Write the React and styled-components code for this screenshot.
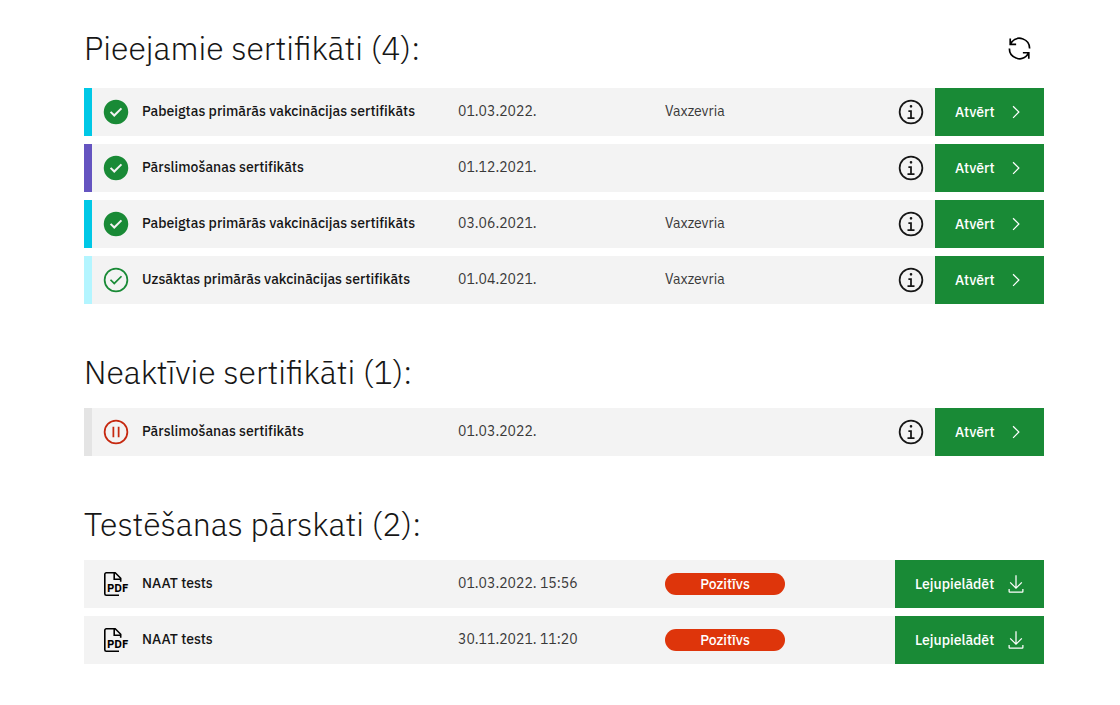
import React from 'react';
import styled, { createGlobalStyle } from 'styled-components';

const GlobalStyle = createGlobalStyle`
    * {
        box-sizing: border-box;
    }

    body {
        margin: 0;
        background: #fff;
        color: #161616;
        font-family: "IBM Plex Sans", "Noto Sans", sans-serif;
        font-size: 14px;
        line-height: 20px;
    }
`;

const Page = styled.main`
    display: flex;
    flex-direction: column;
    gap: 48px;
    padding: 24px 76px 40px 84px;
`;

const SectionHeader = styled.header`
    display: flex;
    justify-content: space-between;
    align-items: center;
    margin-bottom: 16px;
`;

const SectionTitle = styled.h2`
    margin: 0;
    font-size: 32px;
    font-weight: 300;
    line-height: 40px;
`;

const RefreshButton = styled.button`
    display: flex;
    justify-content: center;
    align-items: center;
    width: 50px;
    height: 48px;
    padding: 0;
    border: none;
    background: transparent;
    color: #000;
    cursor: pointer;
`;

const RowList = styled.ul`
    display: flex;
    flex-direction: column;
    gap: 8px;
    margin: 0;
    padding: 0;
    list-style: none;
`;

const Row = styled.li`
    display: grid;
    grid-template-columns: 50px 316fr 207fr 379fr;
    align-items: center;
    min-height: 48px;
    border-left: 8px solid ${({ $accent }) => $accent || '#f3f3f3'};
    background: #f3f3f3;
`;

const StatusIcon = styled.span`
    display: flex;
    padding-left: 10px;
    color: ${({ $color }) => $color};
`;

const RowName = styled.span`
    padding-bottom: 2px;
    font-weight: 500;
    font-variant-ligatures: none;
`;

const RowText = styled.span`
    padding-bottom: 2px;
    color: #393939;
`;

const RowEnd = styled.div`
    display: flex;
    align-items: center;
    align-self: stretch;
`;

const Badge = styled.span`
    width: 120px;
    border-radius: 11px;
    background: #de350b;
    color: #fff;
    font-weight: 500;
    line-height: 22px;
    text-align: center;
`;

const RowActions = styled.div`
    display: flex;
    align-items: center;
    align-self: stretch;
    gap: 10px;
    margin-left: auto;
`;

const InfoButton = styled.button`
    display: flex;
    padding: 0;
    border: none;
    background: transparent;
    color: #161616;
    cursor: pointer;
`;

const ActionButton = styled.button`
    display: flex;
    justify-content: space-between;
    align-items: center;
    align-self: stretch;
    width: ${({ $wide }) => ($wide ? 149 : 109)}px;
    padding: 0 18px 0 20px;
    border: none;
    background: #198a36;
    color: #fff;
    font: inherit;
    font-weight: 500;
    cursor: pointer;
`;

const CIRCLE = 'M16 2a14 14 0 1 0 14 14A14 14 0 0 0 16 2z';
const RING = `${CIRCLE}m0 26a12 12 0 1 1 12-12 12 12 0 0 1-12 12z`;

const ICONS = {
    renew: 'M12 10H6.78A11 11 0 0 1 27 16h2A13 13 0 0 0 6 7.68V4H4v8h8zM20 22h5.22A11 11 0 0 1 5 16H3a13 13 0 0 0 23 8.32V28h2v-8h-8z',
    done: `${CIRCLE}m-2 19.6-5-5L10.6 15l3.4 3.4L21.4 11l1.6 1.6z`,
    started: `${RING}M14 21.4l-5-5L10.4 15l3.6 3.6L21.6 11l1.4 1.4z`,
    paused: `${RING}M12 10h2v12h-2zM18 10h2v12h-2z`,
    info: `${RING}M17 22v-8h-4v2h2v6h-3v2h8v-2zM16 8a1.5 1.5 0 1 0 1.5 1.5A1.5 1.5 0 0 0 16 8z`,
    chevron: 'M22 16 12 26l-1.4-1.4 8.6-8.6-8.6-8.6L12 6z',
    download: 'M26 24v4H6v-4H4v4a2 2 0 0 0 2 2h20a2 2 0 0 0 2-2v-4zM26 14l-1.4-1.4-7.6 7.6V2h-2v18.2l-7.6-7.6L6 14l10 10z',
};

const Icon = ({ name, size }) => (
    <svg width={size} height={size} viewBox="0 0 32 32" fill="currentColor" fillRule="evenodd" aria-hidden="true">
        <path d={ICONS[name]} />
    </svg>
);

const PdfIcon = () => (
    <svg width="28" height="28" viewBox="0 0 28 28" aria-hidden="true">
        <path d="M17 25.3H4.3a1.5 1.5 0 0 1-1.5-1.5V4.3a1.5 1.5 0 0 1 1.5-1.5h8.9l5.5 5.5v3.5M12.2 3v6.3h6.5" fill="none" stroke="#000" strokeWidth="1.6" />
        <text x="5" y="22" fontSize="11" fontWeight="700" fill="#000">PDF</text>
    </svg>
);

const STATUS_COLORS = {
    done: '#198a36',
    started: '#198a36',
    paused: '#c6280f',
};

const activeCertificates = [
    { id: 1, status: 'done', accent: '#00c8e6', name: 'Pabeigtas primārās vakcinācijas sertifikāts', date: '01.03.2022.', product: 'Vaxzevria' },
    { id: 2, status: 'done', accent: '#6554c0', name: 'Pārslimošanas sertifikāts', date: '01.12.2021.' },
    { id: 3, status: 'done', accent: '#00c8e6', name: 'Pabeigtas primārās vakcinācijas sertifikāts', date: '03.06.2021.', product: 'Vaxzevria' },
    { id: 4, status: 'started', accent: '#b3f5ff', name: 'Uzsāktas primārās vakcinācijas sertifikāts', date: '01.04.2021.', product: 'Vaxzevria' },
];

const inactiveCertificates = [
    { id: 5, status: 'paused', accent: '#e4e4e4', name: 'Pārslimošanas sertifikāts', date: '01.03.2022.' },
];

const reports = [
    { id: 6, name: 'NAAT tests', date: '01.03.2022. 15:56', result: 'Pozitīvs' },
    { id: 7, name: 'NAAT tests', date: '30.11.2021. 11:20', result: 'Pozitīvs' },
];

const Section = ({ title, count, action, children }) => (
    <section>
        <SectionHeader>
            <SectionTitle>{`${title} (${count}):`}</SectionTitle>
            {action}
        </SectionHeader>
        <RowList>{children}</RowList>
    </section>
);

const CertificateRow = ({ status, accent, name, date, product }) => (
    <Row $accent={accent}>
        <StatusIcon $color={STATUS_COLORS[status]}>
            <Icon name={status} size={28} />
        </StatusIcon>
        <RowName>{name}</RowName>
        <RowText>{date}</RowText>
        <RowEnd>
            <RowText>{product}</RowText>
            <RowActions>
                <InfoButton type="button" aria-label="Informācija">
                    <Icon name="info" size={28} />
                </InfoButton>
                <ActionButton type="button">
                    Atvērt
                    <Icon name="chevron" size={20} />
                </ActionButton>
            </RowActions>
        </RowEnd>
    </Row>
);

const ReportRow = ({ name, date, result }) => (
    <Row>
        <StatusIcon>
            <PdfIcon />
        </StatusIcon>
        <RowName>{name}</RowName>
        <RowText>{date}</RowText>
        <RowEnd>
            <Badge>{result}</Badge>
            <RowActions>
                <ActionButton type="button" $wide>
                    Lejupielādēt
                    <Icon name="download" size={20} />
                </ActionButton>
            </RowActions>
        </RowEnd>
    </Row>
);

const App = () => {
    const refreshButton = (
        <RefreshButton type="button" aria-label="Atjaunot">
            <Icon name="renew" size={27} />
        </RefreshButton>
    );

    return (
        <>
            <GlobalStyle />
            <Page>
                <Section title="Pieejamie sertifikāti" count={activeCertificates.length} action={refreshButton}>
                    {activeCertificates.map(item => <CertificateRow key={item.id} {...item} />)}
                </Section>
                <Section title="Neaktīvie sertifikāti" count={inactiveCertificates.length}>
                    {inactiveCertificates.map(item => <CertificateRow key={item.id} {...item} />)}
                </Section>
                <Section title="Testēšanas pārskati" count={reports.length}>
                    {reports.map(item => <ReportRow key={item.id} {...item} />)}
                </Section>
            </Page>
        </>
    );
};

export default App;
